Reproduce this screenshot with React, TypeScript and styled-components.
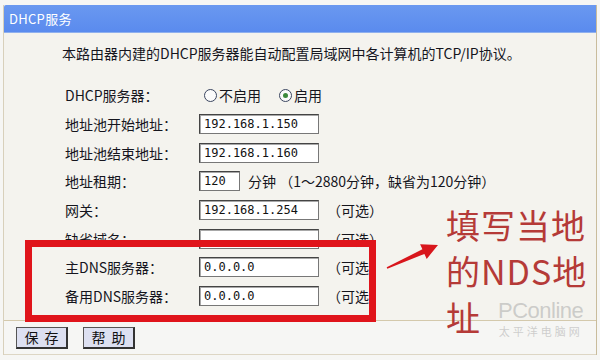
import styled, { createGlobalStyle } from "styled-components";

const GlobalStyle = createGlobalStyle`
  html, body {
    margin: 0;
    padding: 0;
    background: #f6f6f4;
  }
  body {
    width: 600px;
    height: 360px;
    overflow: hidden;
    font-family: "Noto Sans CJK SC", "DejaVu Sans", sans-serif;
  }
`;

const Stage = styled.div`
  position: relative;
  width: 600px;
  height: 360px;
  padding-top: 5px;
  box-sizing: border-box;
`;

const Frame = styled.div`
  margin-left: 3px;
  width: 592px;
  border-left: 1px solid #d8d0bb;
  border-right: 1px solid #c9bc9c;
`;

const Header = styled.div`
  height: 27px;
  display: flex;
  align-items: center;
  padding-left: 5px;
  background: linear-gradient(#6a98f0, #5a8bee);
  border-bottom: 1px solid #8fb0ee;
  border-radius: 2px 0 0 0;
  color: #fff;
  font-size: 13px;
  letter-spacing: 0.3px;
`;

const Body = styled.div`
  height: 288px;
  background: #f4f3ee;
  border-bottom: 1px solid #d4c9ac;
  padding: 10px 0 0 58px;
  box-sizing: border-box;
  color: #15151d;
  font-size: 14px;
`;

const Intro = styled.div`
  line-height: 20px;
`;

const Form = styled.div`
  margin-top: 18px;
  display: grid;
  grid-template-columns: 137px 1fr;
  grid-auto-rows: 28.7px;
  align-items: center;
`;

const Label = styled.div`
  padding-left: 3px;
  line-height: 20px;
`;

const Field = styled.div`
  display: flex;
  align-items: center;
  gap: 8px;
  white-space: nowrap;
`;

const Input = styled.div<{ $w?: number }>`
  width: ${(p) => p.$w ?? 120}px;
  height: 20px;
  box-sizing: border-box;
  background: #fff;
  border: 1px solid #777;
  border-top-color: #444;
  border-left-color: #444;
  box-shadow: inset 1px 1px 0 #a8a8a8;
  padding-left: 4px;
  font-family: "DejaVu Sans Mono", "Liberation Mono", monospace;
  font-size: 12px;
  line-height: 18px;
  color: #111;
`;

const Radio = styled.label`
  display: flex;
  align-items: center;
  gap: 2px;
  margin-right: 10px;
  &:first-child {
    margin-left: 5px;
  }
`;

const Dot = styled.span<{ $on?: boolean }>`
  width: 13px;
  height: 13px;
  box-sizing: border-box;
  border: 1px solid #3b4660;
  border-radius: 50%;
  background: #fbfbfb;
  display: flex;
  align-items: center;
  justify-content: center;
  &::after {
    content: "";
    width: 5px;
    height: 5px;
    border-radius: 50%;
    background: ${(p) => (p.$on ? "#3c8a3c" : "transparent")};
  }
`;

const Footer = styled.div`
  height: 33px;
  display: flex;
  align-items: center;
  gap: 15px;
  padding-left: 12px;
  border-bottom: 1px solid #ddd6c4;
`;

const Button = styled.button`
  width: 52px;
  height: 22px;
  padding: 0;
  background: #dde0f1;
  border: 1px solid #555;
  border-right: 2px solid #333;
  border-bottom: 2px solid #333;
  font-family: "Noto Sans CJK SC", sans-serif;
  font-size: 14px;
  line-height: 18px;
  letter-spacing: 6px;
  text-indent: 6px;
  color: #111;
`;

const RedBox = styled.div`
  position: absolute;
  left: 25px;
  top: 240px;
  width: 351px;
  height: 82px;
  box-sizing: border-box;
  border: 7px solid #e0141b;
`;

const Note = styled.div`
  position: absolute;
  left: 446px;
  top: 202px;
  font-family: "Noto Sans CJK SC", sans-serif;
  font-size: 34px;
  line-height: 46px;
  color: #b53a37;
  letter-spacing: 1px;
`;

const NoteLine = styled.div`
  width: max-content;
`;

const Arrow = styled.svg`
  position: absolute;
  left: 380px;
  top: 235px;
`;

const Watermark = styled.div`
  position: absolute;
  left: 498px;
  top: 300px;
  color: rgba(170, 170, 170, 0.55);
  font-family: "Liberation Sans", sans-serif;
  text-align: center;
  span {
    display: block;
    font-size: 22px;
    line-height: 22px;
    letter-spacing: -0.5px;
  }
  small {
    display: block;
    font-family: "Noto Sans CJK SC", sans-serif;
    font-size: 11px;
    line-height: 13px;
    letter-spacing: 3px;
    margin-top: 3px;
  }
`;

const rows: { label: string; value?: string; tail?: string }[] = [
  { label: "地址池开始地址：", value: "192.168.1.150" },
  { label: "地址池结束地址：", value: "192.168.1.160" },
  { label: "地址租期：", value: "120" },
  { label: "网关：", value: "192.168.1.254", tail: "（可选）" },
  { label: "缺省域名：", value: "", tail: "（可选）" },
  { label: "主DNS服务器：", value: "0.0.0.0", tail: "（可选）" },
  { label: "备用DNS服务器：", value: "0.0.0.0", tail: "（可选）" },
];

const App = () => {
  return (
    <Stage>
      <GlobalStyle />
      <Frame>
        <Header>DHCP服务</Header>
        <Body>
          <Intro>本路由器内建的DHCP服务器能自动配置局域网中各计算机的TCP/IP协议。</Intro>
          <Form>
            <Label>DHCP服务器：</Label>
            <Field>
              <Radio>
                <Dot />
                不启用
              </Radio>
              <Radio>
                <Dot $on />
                启用
              </Radio>
            </Field>
            {rows.map((r) =>
              r.value === "120" ? (
                [
                  <Label key={r.label}>{r.label}</Label>,
                  <Field key={r.label + "f"}>
                    <Input $w={41}>120</Input>
                    <span>分钟 （1～2880分钟，缺省为120分钟）</span>
                  </Field>,
                ]
              ) : (
                [
                  <Label key={r.label}>{r.label}</Label>,
                  <Field key={r.label + "f"}>
                    <Input>{r.value}</Input>
                    {r.tail && <span>{r.tail}</span>}
                  </Field>,
                ]
              )
            )}
          </Form>
        </Body>
        <Footer>
          <Button>保存</Button>
          <Button>帮助</Button>
        </Footer>
      </Frame>

      <RedBox />
      <Arrow width="65" height="40" viewBox="0 0 65 40">
        <polygon
          points="6.7,32.3 42.4,14.3 40.1,9.3 58,10 46.7,23.9 44.4,18.9 7.3,33.7"
          fill="#d8161c"
        />
      </Arrow>
      <Note>
        <NoteLine>填写当地</NoteLine>
        <NoteLine>的NDS地</NoteLine>
        <NoteLine>址</NoteLine>
      </Note>
      <Watermark>
        <span>PConline</span>
        <small>太平洋电脑网</small>
      </Watermark>
    </Stage>
  );
};

export default App;
